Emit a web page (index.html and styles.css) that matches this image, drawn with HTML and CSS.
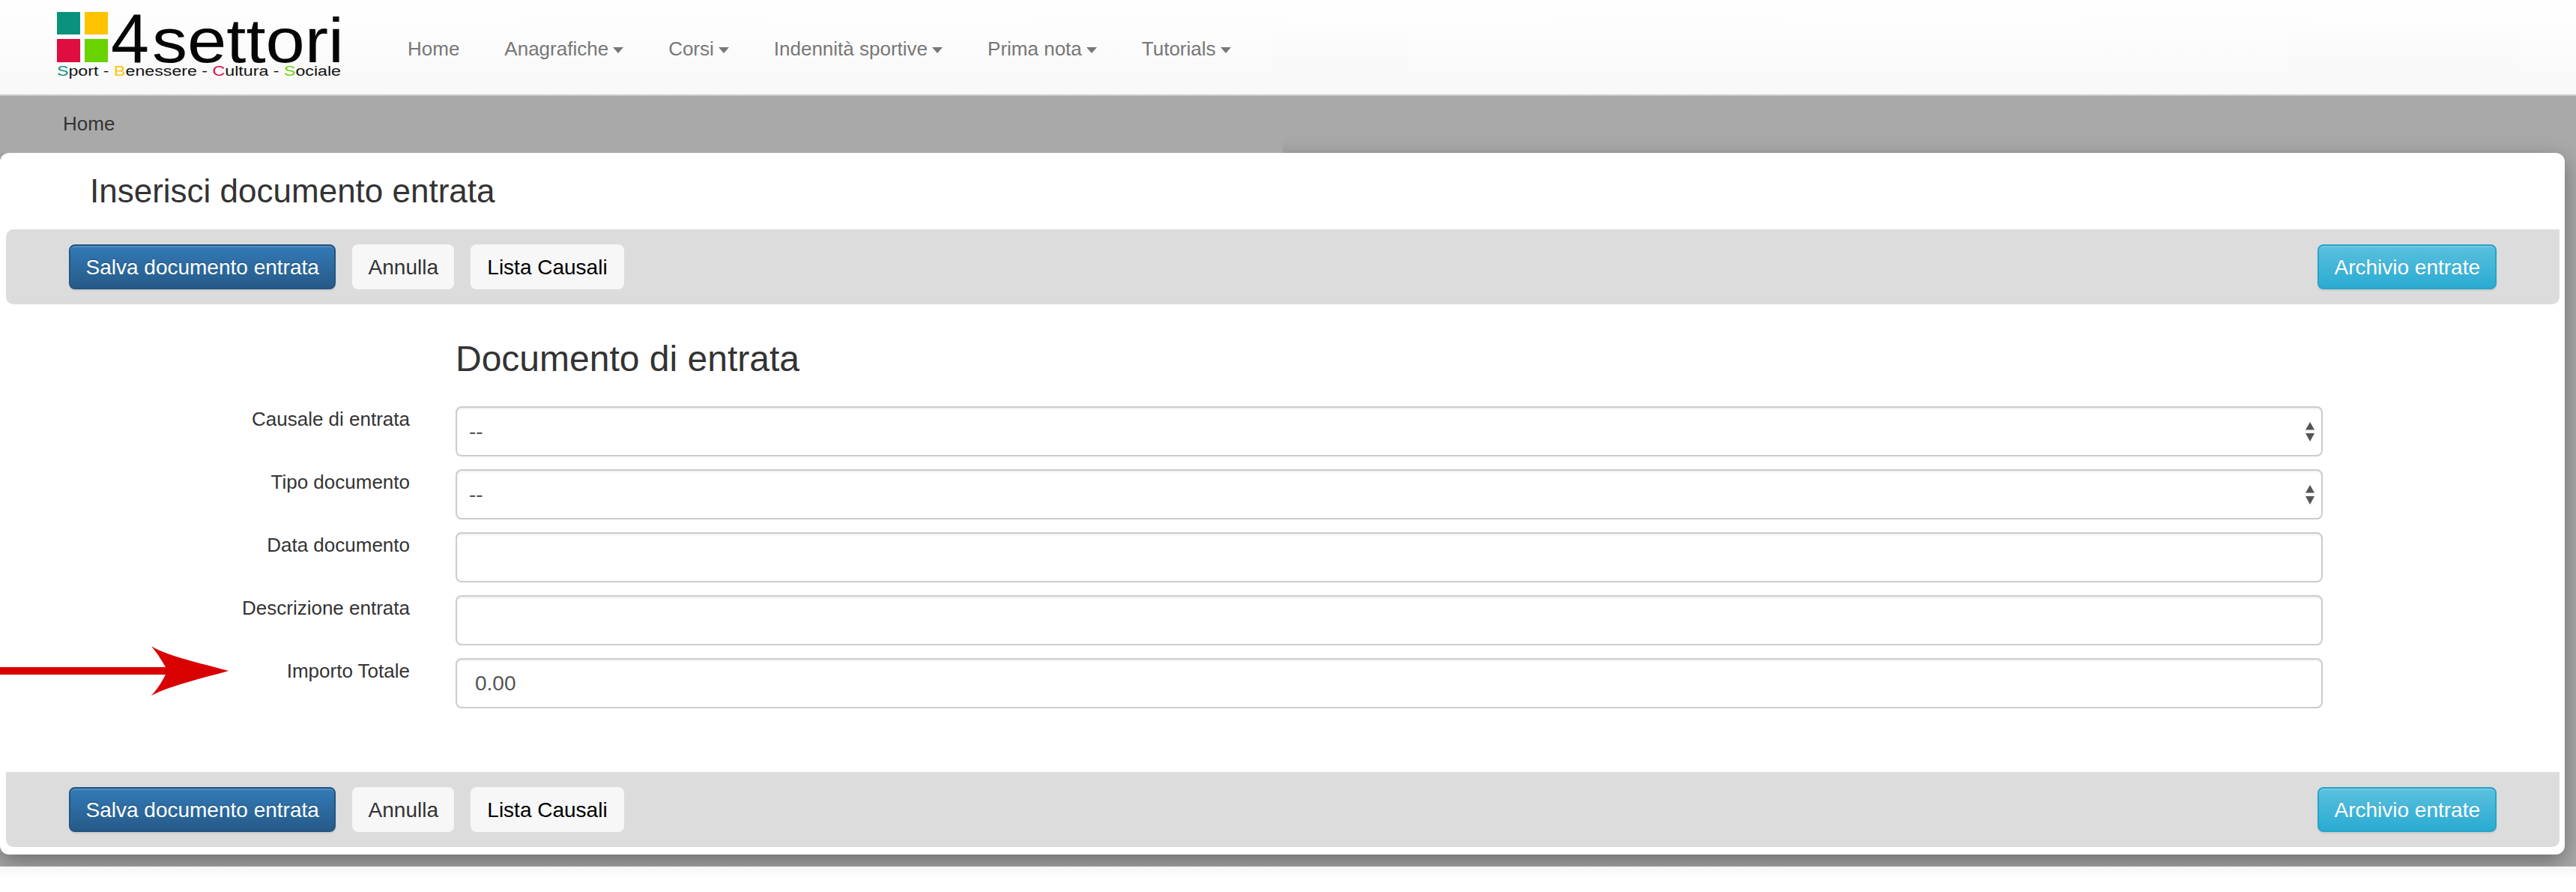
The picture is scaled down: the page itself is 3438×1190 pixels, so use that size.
FILE: index.html
```html
<!DOCTYPE html>
<html lang="it">
<head>
<meta charset="utf-8">
<title>Inserisci documento entrata</title>
<link rel="stylesheet" href="styles.css">
</head>
<body>
<header class="navbar">
  <svg class="logo" width="384" height="110" viewBox="0 0 384 110" aria-label="4settori">
    <rect x="0" y="16" width="31" height="30" fill="#0a927d"/>
    <rect x="37" y="16" width="31" height="30" fill="#ffc200"/>
    <rect x="0" y="52" width="31" height="31" fill="#df0d40"/>
    <rect x="37" y="52" width="31" height="31" fill="#69d300"/>
    <text class="logo-four" x="72" y="83" textLength="51" lengthAdjust="spacingAndGlyphs">4</text>
    <text class="logo-name" x="127" y="83" textLength="256" lengthAdjust="spacingAndGlyphs">settori</text>
    <text class="logo-tag" x="0" y="101" textLength="379" lengthAdjust="spacingAndGlyphs"><tspan fill="#0a927d">S</tspan>port - <tspan fill="#ffc200">B</tspan>enessere - <tspan fill="#df0d40">C</tspan>ultura - <tspan fill="#69d300">S</tspan>ociale</text>
  </svg>
  <nav class="menu">
    <a class="menu-item">Home</a>
    <a class="menu-item">Anagrafiche<i class="caret"></i></a>
    <a class="menu-item">Corsi<i class="caret"></i></a>
    <a class="menu-item">Indennità sportive<i class="caret"></i></a>
    <a class="menu-item">Prima nota<i class="caret"></i></a>
    <a class="menu-item">Tutorials<i class="caret"></i></a>
  </nav>
  <span class="ghost ghost-a"></span>
  <span class="ghost ghost-b"></span>
</header>

<div class="backdrop">
  <div class="breadcrumb">Home</div>
  <main class="modal">
    <h3 class="modal-title">Inserisci documento entrata</h3>
    <div class="toolbar toolbar-top">
      <div class="btn-group">
        <a class="btn btn-primary">Salva documento entrata</a>
        <a class="btn btn-light btn-cancel">Annulla</a>
        <a class="btn btn-light btn-black">Lista Causali</a>
      </div>
      <a class="btn btn-info">Archivio entrate</a>
    </div>

    <form class="form">
      <h2 class="form-title">Documento di entrata</h2>
      <div class="form-grid">
        <label class="form-label">Causale di entrata</label>
        <div class="select-wrap">
          <select class="control select"><option>--</option></select>
          <svg class="select-arrows" width="14" height="26" viewBox="0 0 14 26"><path d="M7 0L13 10.5H1Z M1 15H13L7 26Z" fill="#555"/></svg>
        </div>
        <label class="form-label">Tipo documento</label>
        <div class="select-wrap">
          <select class="control select"><option>--</option></select>
          <svg class="select-arrows" width="14" height="26" viewBox="0 0 14 26"><path d="M7 0L13 10.5H1Z M1 15H13L7 26Z" fill="#555"/></svg>
        </div>
        <label class="form-label">Data documento</label>
        <input class="control" type="text">
        <label class="form-label">Descrizione entrata</label>
        <input class="control" type="text">
        <label class="form-label">Importo Totale</label>
        <input class="control" type="text" value="0.00">
      </div>
    </form>

    <div class="toolbar">
      <div class="btn-group">
        <a class="btn btn-primary">Salva documento entrata</a>
        <a class="btn btn-light btn-cancel">Annulla</a>
        <a class="btn btn-light btn-black">Lista Causali</a>
      </div>
      <a class="btn btn-info">Archivio entrate</a>
    </div>

    <svg class="arrow" width="306" height="68" viewBox="0 0 306 68">
      <path d="M305 33C270 23 225 14 202 0C212 12 218 23 221 28H0V38H221C218 44 212 55 202 66C225 53 270 43 305 33Z" fill="#d90000"/>
    </svg>
  </main>
</div>
<div class="page-foot"></div>
</body>
</html>
```

FILE: styles.css
```css
* { box-sizing: border-box; }

html, body {
  margin: 0;
  background: #fff;
  font-family: "Liberation Sans", Arial, sans-serif;
  color: #333;
}

body { height: 1190px; overflow: hidden; }

.navbar {
  position: relative;
  display: flex;
  align-items: flex-start;
  height: 128px;
  padding: 0 0 0 76px;
  background: linear-gradient(#fff, #f8f8f8);
  border-bottom: 2px solid #c9c9c9;
}

.logo { flex: none; display: block; }
.logo-four { font-size: 93px; fill: #050505; font-family: "Liberation Sans", sans-serif; }
.logo-name { font-size: 83px; fill: #050505; font-family: "Liberation Sans", sans-serif; }
.logo-tag { font-size: 18px; fill: #111; font-family: "Liberation Sans", sans-serif; }

.menu {
  display: flex;
  align-items: center;
  gap: 60px;
  margin: 16px 0 0 84px;
  height: 98px;
}

.menu-item {
  display: flex;
  align-items: center;
  font-size: 26px;
  line-height: 34px;
  color: #777;
}

.caret {
  width: 0;
  height: 0;
  margin: 4px 0 0 6px;
  border-top: 8px solid #777;
  border-left: 7.5px solid transparent;
  border-right: 7.5px solid transparent;
}

.ghost {
  position: absolute;
  top: 42px;
  height: 48px;
  background: rgba(0, 0, 0, 0.004);
  filter: blur(3px);
}
.ghost-a { left: 1698px; width: 180px; }
.ghost-b { left: 3056px; width: 304px; }

.backdrop {
  height: 1028px;
  padding-right: 15px;
  background: #a9a9a9;
  overflow: hidden;
}

.breadcrumb {
  position: relative;
  z-index: 2;
  width: 1712px;
  height: 76px;
  padding: 20px 0 0 84px;
  background: #a9a9a9;
  font-size: 26px;
  line-height: 34px;
  color: #333;
}

.modal {
  position: relative;
  z-index: 1;
  height: 936px;
  padding: 0 7px 10px 8px;
  background: #fff;
  border-radius: 12px;
  box-shadow: 0 10px 30px rgba(0, 0, 0, 0.36);
}

.modal-title {
  height: 102px;
  margin: 0;
  padding: 23px 0 0 112px;
  font-size: 44px;
  font-weight: 400;
  line-height: 56px;
  color: #333;
}

.toolbar {
  display: flex;
  align-items: center;
  justify-content: space-between;
  height: 100px;
  padding: 0 84px;
  background: #dcdcdc;
  border-radius: 0 0 10px 10px;
}

.toolbar-top { border-radius: 10px 0 10px 10px; }

.btn-group { display: flex; gap: 22px; }

.btn {
  display: block;
  height: 60px;
  padding: 0 20px;
  border: 2px solid transparent;
  border-radius: 8px;
  font-size: 28px;
  line-height: 58px;
  white-space: nowrap;
}

.btn-primary {
  padding: 0 20.5px;
  color: #fff;
  background: linear-gradient(#337ab7, #265a88);
  border-color: #245580;
  box-shadow: inset 0 2px 0 rgba(255, 255, 255, 0.15), 0 2px 2px rgba(0, 0, 0, 0.08);
  text-shadow: 0 -2px 0 rgba(0, 0, 0, 0.15);
}

.btn-info {
  color: #fff;
  background: linear-gradient(#5bc0de, #2aabd2);
  border-color: #28a4c9;
  box-shadow: inset 0 2px 0 rgba(255, 255, 255, 0.15), 0 2px 2px rgba(0, 0, 0, 0.08);
  text-shadow: 0 -1px 0 rgba(0, 0, 0, 0.1);
}

.btn-light { color: #333; background: #f7f7f7; }
.btn-cancel { padding: 0 19.3px; }
.btn-black { color: #000; }

.form {
  height: 624px;
  padding: 43px 0 0;
}

.form-title {
  height: 60px;
  margin: 0 0 33px 600px;
  font-size: 48px;
  font-weight: 400;
  line-height: 60px;
  color: #333;
}

.form-grid {
  display: grid;
  grid-template-columns: 539px 2492px;
  column-gap: 61px;
  row-gap: 17px;
  grid-auto-rows: 67px;
}

.form-label {
  font-size: 26px;
  line-height: 34px;
  text-align: right;
  color: #333;
}

.control {
  display: block;
  width: 100%;
  height: 67px;
  padding: 0 24px;
  border: 2px solid #ccc;
  border-radius: 8px;
  background: #fff;
  box-shadow: inset 0 2px 2px rgba(0, 0, 0, 0.06);
  font-family: inherit;
  font-size: 28px;
  color: #555;
  outline: none;
}

.select-wrap { position: relative; }

.select {
  appearance: none;
  -webkit-appearance: none;
  padding: 0 16px;
}

.select-arrows {
  position: absolute;
  top: 21px;
  right: 10px;
}

.arrow {
  position: absolute;
  left: 0;
  top: 658px;
}

.page-foot {
  height: 34px;
  background: linear-gradient(#f5f5f5, #fff 45%);
}
```
